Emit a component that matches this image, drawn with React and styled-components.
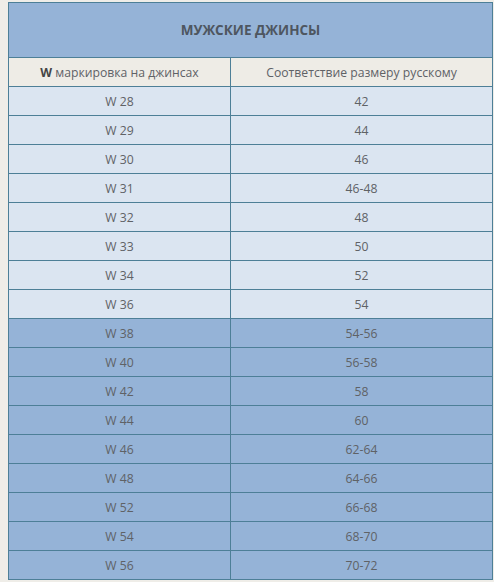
import React from "react"
import styled, { createGlobalStyle } from "styled-components"

const GlobalStyle = createGlobalStyle`
  body {
    margin: 0;
    padding: 2px 0 0 8px;
    background: #efede8;
    font-family: "Open Sans", "Liberation Sans", sans-serif;
  }
`

const Table = styled.table`
  border-collapse: collapse;
  width: 485px;
  table-layout: fixed;
  font-size: 12.2px;
  color: #5f6266;

  td,
  th {
    border: 1px solid #4d7f97;
    text-align: center;
    padding: 0;
  }
`

const Title = styled.th`
  height: 54px;
  background: #95b3d7;
  color: #4e5660;
  font-weight: bold;
  font-size: 13.5px;
  text-transform: uppercase;
`

const HeadCell = styled.td`
  height: 28px;
  background: #eeece6;
  font-weight: normal;
  b {
    color: #444;
  }
`

const Cell = styled.td`
  height: 28px;
  background: ${p => (p.$dark ? "#95b3d7" : "#dbe5f1")};
`

const rows = [
  ["W 28", "42"],
  ["W 29", "44"],
  ["W 30", "46"],
  ["W 31", "46-48"],
  ["W 32", "48"],
  ["W 33", "50"],
  ["W 34", "52"],
  ["W 36", "54"],
  ["W 38", "54-56"],
  ["W 40", "56-58"],
  ["W 42", "58"],
  ["W 44", "60"],
  ["W 46", "62-64"],
  ["W 48", "64-66"],
  ["W 52", "66-68"],
  ["W 54", "68-70"],
  ["W 56", "70-72"],
]

export default function App() {
  return (
    <>
      <GlobalStyle />
      <Table>
        <colgroup>
          <col style={{ width: 222 }} />
          <col />
        </colgroup>
        <thead>
          <tr>
            <Title colSpan={2}>Мужские джинсы</Title>
          </tr>
        </thead>
        <tbody>
          <tr>
            <HeadCell>
              <b>W</b> маркировка на джинсах
            </HeadCell>
            <HeadCell>Соответствие размеру русскому</HeadCell>
          </tr>
          {rows.map(([w, ru], i) => (
            <tr key={w}>
              <Cell $dark={i >= 8}>{w}</Cell>
              <Cell $dark={i >= 8}>{ru}</Cell>
            </tr>
          ))}
        </tbody>
      </Table>
    </>
  )
}
